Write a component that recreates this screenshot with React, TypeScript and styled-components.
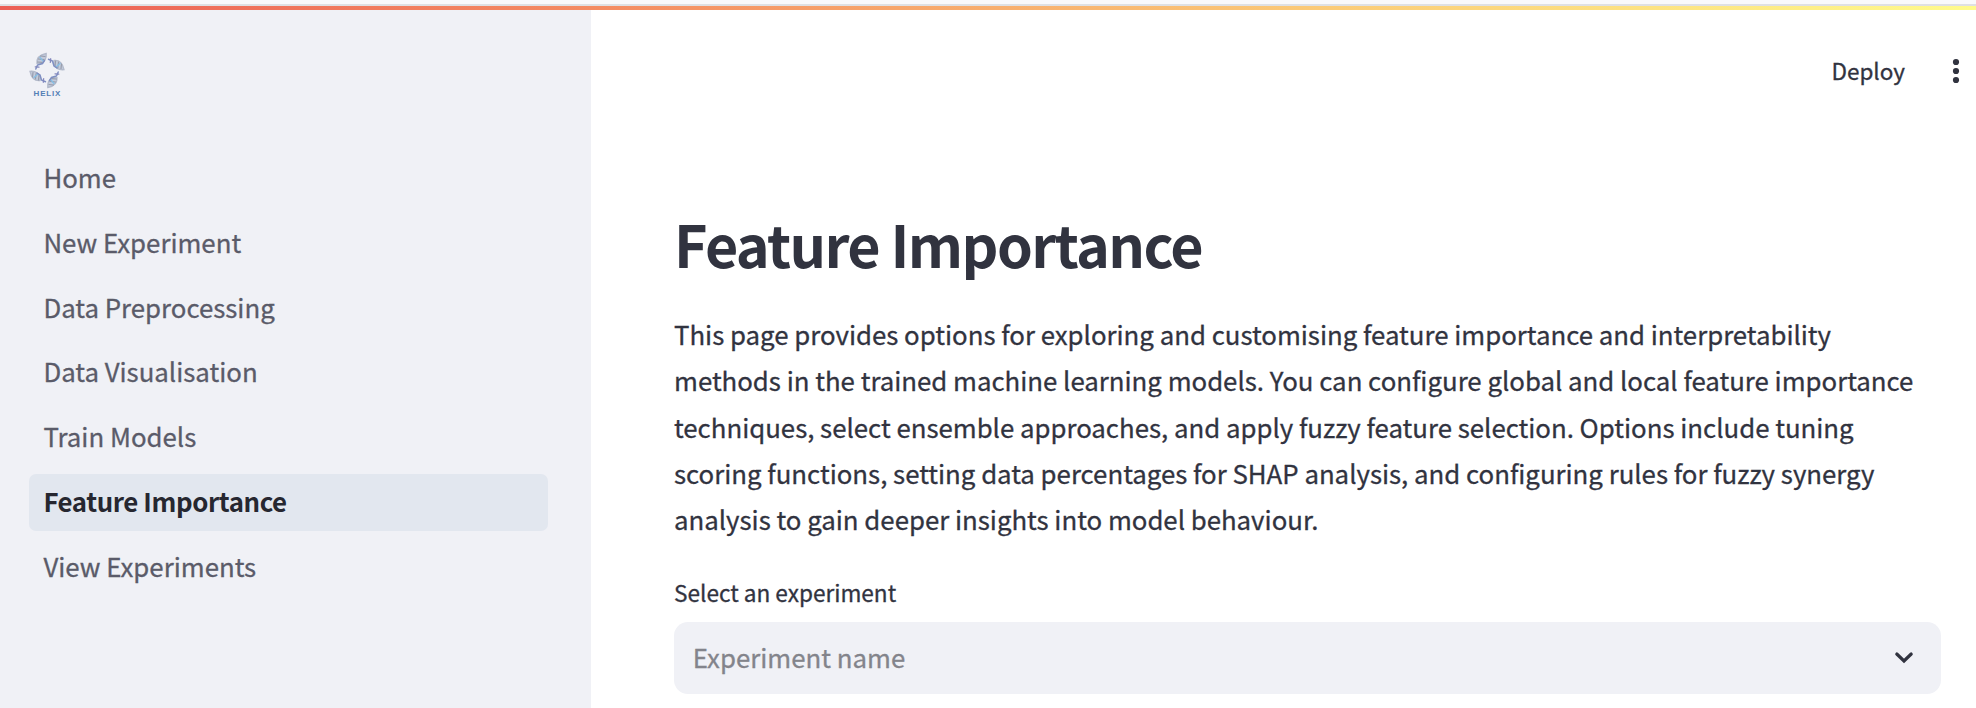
import React from "react";
import styled, { createGlobalStyle } from "styled-components";

const GlobalStyle = createGlobalStyle`
  *, *::before, *::after { box-sizing: border-box; }
  html, body { margin: 0; padding: 0; background: #fff; overflow: hidden; }
  body {
    font-family: "Source Sans Pro", "Noto Sans CJK SC", "Noto Sans", sans-serif;
    color: #31333f;
    -webkit-font-smoothing: antialiased;
    -webkit-text-stroke: 0.3px currentColor;
  }
`;

const Page = styled.div`
  display: flex;
  flex-direction: column;
  height: 708px;
`;

const WindowEdge = styled.div`
  height: 6px;
  flex: none;
  background: #f9f9fb;
  border-bottom: 2px solid #dfe0e3;
`;

const Decoration = styled.div`
  height: 4px;
  flex: none;
  background: linear-gradient(90deg, #ec5f55, #f48b62 30%, #fbc977 66%, #fffb8c);
`;

const Body = styled.div`
  display: flex;
  flex: 1;
  min-height: 0;
`;

const Sidebar = styled.aside`
  width: 591px;
  flex: none;
  padding: 41px 43px 0 29px;
  background: #f0f1f6;
`;

const LogoSlot = styled.div`
  height: 99px;
`;

const LogoDrawing = styled.svg`
  display: block;
  -webkit-text-stroke: 0;
`;

const Nav = styled.nav`
  display: flex;
  flex-direction: column;
  gap: 7.8px;
`;

const NavItem = styled.a<{ $active?: boolean }>`
  display: flex;
  align-items: center;
  height: 57px;
  padding: 0 14.4px 3px;
  border-radius: 7px;
  font-size: 25.8px;
  line-height: 40px;
  letter-spacing: ${(p) => (p.$active ? "-0.39px" : "0")};
  white-space: nowrap;
  color: ${(p) => (p.$active ? "#262730" : "#5a5b69")};
  font-weight: ${(p) => (p.$active ? 700 : 400)};
  -webkit-text-stroke-width: ${(p) => (p.$active ? "0" : "0.3px")};
  background: ${(p) => (p.$active ? "#e2e7ef" : "transparent")};
`;

const Main = styled.main`
  flex: 1;
  min-width: 0;
  display: flex;
  flex-direction: column;
`;

const Toolbar = styled.header`
  display: flex;
  align-items: center;
  justify-content: flex-end;
  gap: 46px;
  height: 120px;
  padding-right: 15px;
`;

const DeployButton = styled.span`
  font-size: 22.5px;
  line-height: 36px;
`;

const MenuIcon = styled.svg`
  display: block;
  margin-top: 2px;
`;

const Content = styled.section`
  padding: 78px 35px 0 83px;
`;

const Title = styled.h1`
  margin: 0;
  height: 103px;
  font-size: 57.4px;
  line-height: 70px;
  font-weight: 700;
  letter-spacing: -1.6px;
  white-space: nowrap;
  -webkit-text-stroke-width: 0;
`;

const Description = styled.p`
  margin: 0;
  font-size: 25.8px;
  line-height: 46.3px;
  letter-spacing: -0.01px;
`;

const Line = styled.span`
  display: block;
  white-space: nowrap;
`;

const Label = styled.label`
  display: block;
  height: 44px;
  margin-top: 36px;
  font-size: 22.6px;
  line-height: 30px;
`;

const Select = styled.div`
  display: flex;
  align-items: center;
  justify-content: space-between;
  width: 1267px;
  height: 72px;
  padding: 0 27px 0 18.8px;
  border-radius: 14px;
  background: #f0f1f6;
`;

const Placeholder = styled.span`
  color: #83848b;
  font-size: 25.8px;
  line-height: 40px;
  padding-bottom: 3px;
`;

const navigation = [
  "Home",
  "New Experiment",
  "Data Preprocessing",
  "Data Visualisation",
  "Train Models",
  "Feature Importance",
  "View Experiments",
];

const description = [
  "This page provides options for exploring and customising feature importance and interpretability",
  "methods in the trained machine learning models. You can configure global and local feature importance",
  "techniques, select ensemble approaches, and apply fuzzy feature selection. Options include tuning",
  "scoring functions, setting data percentages for SHAP analysis, and configuring rules for fuzzy synergy",
  "analysis to gain deeper insights into model behaviour.",
];

function HelixLogo() {
  return (
    <LogoDrawing width="36" height="48" viewBox="0 0 36 48" role="img" aria-label="Helix">
      {[0, 90, 180, 270].map((angle) => (
        <g key={angle} transform={`rotate(${angle} 18 19.5)`} fill="none" strokeLinecap="round">
          <path d="M8 12.5C7.5 7.5 10 4 17.2 2.5C17.6 7 16 11 11 12.8Z" fill="#c3cbdc" stroke="#b3bacb" strokeWidth="1.3" />
          <path d="M11.5 5L16 5.5M9.5 8L15 8.6M8.5 11L13 11.4" stroke="#979cab" strokeWidth="1.2" />
          <path d="M11 6.5L14.5 10.5" stroke="#85bfe6" strokeWidth="1.3" />
          <path d="M15.5 9.5L13.5 12.5L8.5 14L6.8 18" stroke="#7f8fc2" strokeWidth="1.5" />
          <path d="M6.2 15.8L10 16.2" stroke="#8387bd" strokeWidth="1.2" />
        </g>
      ))}
      <text x="4.6" y="45.4" fontFamily="Liberation Sans, sans-serif" fontWeight="700" fontSize="8" letterSpacing="0.8" fill="#5380b5">
        HELIX
      </text>
    </LogoDrawing>
  );
}

export default function App() {
  return (
    <Page>
      <GlobalStyle />
      <WindowEdge />
      <Decoration />
      <Body>
        <Sidebar>
          <LogoSlot>
            <HelixLogo />
          </LogoSlot>
          <Nav>
            {navigation.map((name) => (
              <NavItem key={name} $active={name === "Feature Importance"}>
                {name}
              </NavItem>
            ))}
          </Nav>
        </Sidebar>
        <Main>
          <Toolbar>
            <DeployButton>Deploy</DeployButton>
            <MenuIcon width="10" height="26" viewBox="0 0 10 26" fill="#31333f">
              <circle cx="5" cy="4" r="3.1" />
              <circle cx="5" cy="13" r="3.1" />
              <circle cx="5" cy="22" r="3.1" />
            </MenuIcon>
          </Toolbar>
          <Content>
            <Title>Feature Importance</Title>
            <Description>
              {description.map((line) => (
                <Line key={line}>{line}</Line>
              ))}
            </Description>
            <Label>Select an experiment</Label>
            <Select>
              <Placeholder>Experiment name</Placeholder>
              <svg width="20" height="14" viewBox="0 0 20 14" fill="none" stroke="#31333f" strokeWidth="3.2" strokeLinecap="round">
                <path d="M2.8 3L10 10L17.2 3" />
              </svg>
            </Select>
          </Content>
        </Main>
      </Body>
    </Page>
  );
}
